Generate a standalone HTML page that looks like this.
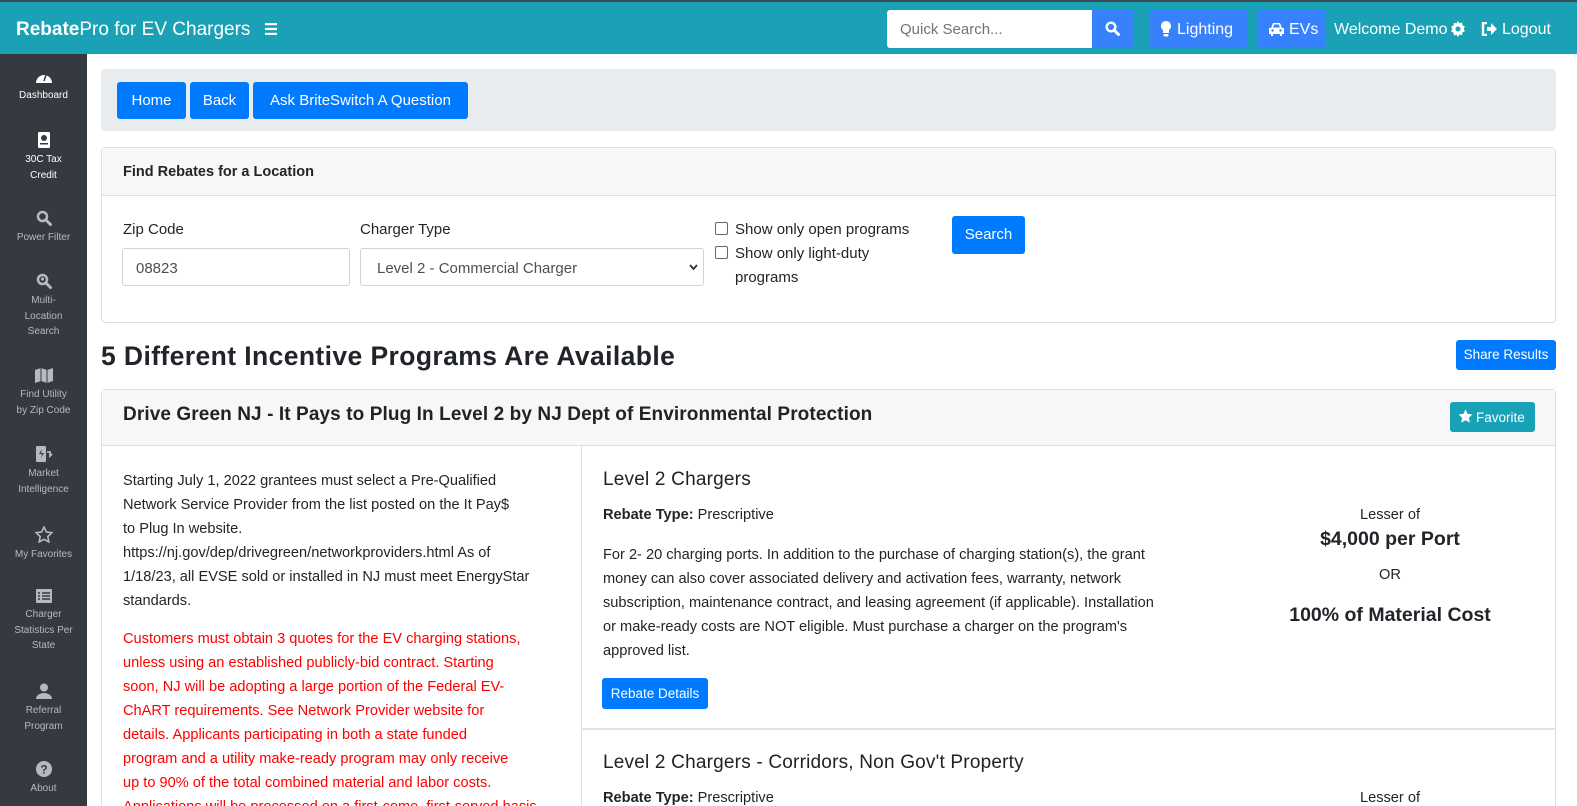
<!DOCTYPE html>
<html><head><meta charset="utf-8">
<style>
*{box-sizing:border-box;margin:0;padding:0}
html,body{width:1577px;height:806px;overflow:hidden}
body{background:#fff;font-family:"Liberation Sans",Arial,sans-serif;color:#212529;position:relative;font-size:15px}
.a{position:absolute;white-space:nowrap}
.top{position:absolute;left:0;top:0;width:1577px;height:54px;background:#1aa1b5;border-top:2px solid #3b4a52}
.side{position:absolute;left:0;top:54px;width:87px;height:752px;background:#343a40}
.si{position:absolute;left:0;width:87px;text-align:center;color:#b5bac0;font-size:10px;line-height:15.5px}
.si svg{display:block;margin:0 auto 4px}
.btn{position:absolute;background:#007bff;color:#fff;border-radius:3px;text-align:center;font-size:15px}
.p{font-size:14.6px;line-height:24px}
</style></head><body>
<div class="top"></div>
<div class="a" style="left:16px;top:19px;color:#fff;font-size:19px"><b>Rebate</b>Pro for EV Chargers</div>
<svg class="a" style="left:265px;top:23px" width="12" height="12"><rect y="0" width="12" height="2.2" fill="#fff"/><rect y="4.9" width="12" height="2.2" fill="#fff"/><rect y="9.8" width="12" height="2.2" fill="#fff"/></svg>
<div class="a" style="left:887px;top:10px;width:205px;height:38px;background:#fff;border-radius:3px 0 0 3px"></div>
<div class="a" style="left:900px;top:21px;color:#6c757d;font-size:15px">Quick Search...</div>
<div class="a" style="left:1092px;top:10px;width:42px;height:38px;background:#3881fd;border-radius:0 3px 3px 0"></div>
<svg class="a" style="left:1105px;top:21px" width="15" height="15"><circle cx="6" cy="6" r="4.3" stroke="#fff" stroke-width="2.4" fill="none"/><line x1="9" y1="9" x2="13.5" y2="13.5" stroke="#fff" stroke-width="3" stroke-linecap="round"/></svg>
<div class="a" style="left:1150px;top:10px;width:98px;height:38px;background:#3881fd;border-radius:3px"></div>
<svg class="a" style="left:1160px;top:20px" width="12" height="18"><path d="M6 1a5 5 0 0 0-3 9v3h6v-3a5 5 0 0 0-3-9z" fill="#fff"/><rect x="3.5" y="14" width="5" height="2.5" rx="1" fill="#fff"/></svg>
<div class="a" style="left:1177px;top:21px;color:#fff;font-size:16px">Lighting</div>
<div class="a" style="left:1257px;top:10px;width:69px;height:38px;background:#3881fd;border-radius:3px"></div>
<svg class="a" style="left:1268px;top:22px" width="17" height="14"><path d="M3 6l2-5h7l2 5h2v6h-2v2h-2v-2H5v2H3v-2H1V6z" fill="#fff"/><circle cx="4.5" cy="8.5" r="1.2" fill="#3881fd"/><circle cx="12.5" cy="8.5" r="1.2" fill="#3881fd"/><path d="M5 5.5l1.2-3h4.6l1.2 3z" fill="#3881fd"/></svg>
<div class="a" style="left:1289px;top:21px;color:#fff;font-size:16px">EVs</div>
<div class="a" style="left:1334px;top:21px;color:#fff;font-size:16px">Welcome Demo</div>
<svg class="a" style="left:1450px;top:21px" width="16" height="16" viewBox="0 0 16 16"><path d="M8 0l1.5 2.2 2.6-.7.3 2.7 2.5 1.2-1.2 2.4 1.2 2.4-2.5 1.2-.3 2.7-2.6-.7L8 16l-1.5-2.2-2.6.7-.3-2.7-2.5-1.2L2.3 8 1.1 5.6l2.5-1.2.3-2.7 2.6.7z" fill="#fff"/><circle cx="8" cy="8" r="2.5" fill="#1aa1b5"/></svg>
<svg class="a" style="left:1481px;top:22px" width="16" height="14"><path d="M6 1H2v12h4" stroke="#fff" stroke-width="2.4" fill="none"/><path d="M6 5h4V1l6 6-6 6V9H6z" fill="#fff"/></svg>
<div class="a" style="left:1502px;top:21px;color:#fff;font-size:16px">Logout</div>

<div class="side"></div>
<div class="si" style="top:69px;color:#fff"><svg width="18" height="15"><path d="M1 14A8 8 0 1 1 17 14z" fill="#fff"/><line x1="9" y1="12" x2="11" y2="6" stroke="#343a40" stroke-width="1.5"/></svg>Dashboard</div>
<div class="si" style="top:132px;color:#fff"><svg width="14" height="16"><rect x="1" y="0" width="12" height="16" rx="1" fill="#fff"/><circle cx="7" cy="6" r="3" fill="#343a40"/><rect x="3" y="11" width="8" height="1.5" fill="#343a40"/></svg>30C Tax<br>Credit</div>
<div class="si" style="top:210px"><svg width="16" height="16"><circle cx="6.5" cy="6.5" r="4.5" stroke="#b5bac0" stroke-width="2.5" fill="none"/><line x1="10" y1="10" x2="14.5" y2="14.5" stroke="#b5bac0" stroke-width="3" stroke-linecap="round"/></svg>Power Filter</div>
<div class="si" style="top:273px"><svg width="16" height="16"><circle cx="6.5" cy="6.5" r="4.5" stroke="#b5bac0" stroke-width="2.5" fill="none"/><circle cx="6.5" cy="6" r="1.6" fill="#b5bac0"/><line x1="10" y1="10" x2="14.5" y2="14.5" stroke="#b5bac0" stroke-width="3" stroke-linecap="round"/></svg>Multi-<br>Location<br>Search</div>
<div class="si" style="top:368px"><svg width="18" height="15"><path d="M0 2l6-2 6 2 6-2v13l-6 2-6-2-6 2z" fill="#b5bac0"/><path d="M6 0v13M12 2v13" stroke="#343a40" stroke-width="1"/></svg>Find Utility<br>by Zip Code</div>
<div class="si" style="top:446px"><svg width="18" height="16"><rect x="1" y="0" width="10" height="16" rx="1" fill="#b5bac0"/><path d="M7 3l-3 5h3l-1 4 3-5H6z" fill="#343a40"/><path d="M12 6h3v4l2-2" stroke="#b5bac0" stroke-width="1.8" fill="none"/></svg>Market<br>Intelligence</div>
<div class="si" style="top:526px"><svg width="18" height="17"><path d="M9 1l2.4 5 5.4.7-4 3.8 1 5.4L9 13.3 4.2 15.9l1-5.4-4-3.8 5.4-.7z" stroke="#b5bac0" stroke-width="1.6" fill="none"/></svg>My Favorites</div>
<div class="si" style="top:589px"><svg width="16" height="14"><rect width="16" height="14" rx="1" fill="#b5bac0"/><path d="M2 4h2M2 7h2M2 10h2M6 4h8M6 7h8M6 10h8" stroke="#343a40" stroke-width="1.4"/></svg>Charger<br>Statistics Per<br>State</div>
<div class="si" style="top:683px"><svg width="16" height="16"><circle cx="8" cy="4.5" r="4" fill="#b5bac0"/><path d="M0 16a8 6 0 0 1 16 0z" fill="#b5bac0"/></svg>Referral<br>Program</div>
<div class="si" style="top:761px"><svg width="16" height="16"><circle cx="8" cy="8" r="8" fill="#b5bac0"/><text x="8" y="12.5" font-size="12" font-weight="bold" text-anchor="middle" fill="#343a40" font-family="Liberation Sans">?</text></svg>About</div>

<div class="a" style="left:101px;top:69px;width:1455px;height:62px;background:#e9ecef;border-radius:4px"></div>
<div class="btn" style="left:117px;top:82px;width:69px;height:37px;line-height:37px">Home</div>
<div class="btn" style="left:190px;top:82px;width:59px;height:37px;line-height:37px">Back</div>
<div class="btn" style="left:253px;top:82px;width:215px;height:37px;line-height:37px">Ask BriteSwitch A Question</div>

<div class="a" style="left:101px;top:147px;width:1455px;height:176px;border:1px solid #dfdfdf;border-radius:4px"></div>
<div class="a" style="left:102px;top:148px;width:1453px;height:48px;background:#f7f7f7;border-bottom:1px solid #dfdfdf"></div>
<div class="a" style="left:123px;top:164px;font-size:14.5px;font-weight:bold">Find Rebates for a Location</div>
<div class="a" style="left:123px;top:221px;font-size:15px">Zip Code</div>
<div class="a" style="left:122px;top:248px;width:228px;height:38px;border:1px solid #ced4da;border-radius:3px"></div>
<div class="a" style="left:136px;top:260px;font-size:15px;color:#495057">08823</div>
<div class="a" style="left:360px;top:221px;font-size:15px">Charger Type</div>
<div class="a" style="left:360px;top:248px;width:344px;height:38px;border:1px solid #ced4da;border-radius:3px"></div>
<div class="a" style="left:377px;top:260px;font-size:15px;color:#495057">Level 2 - Commercial Charger</div>
<svg class="a" style="left:689px;top:264px" width="9" height="7"><path d="M1 1l3.5 4L8 1" stroke="#333" stroke-width="1.8" fill="none"/></svg>
<div class="a" style="left:715px;top:222px;width:13px;height:13px;border:1px solid #666;border-radius:2px"></div>
<div class="a" style="left:715px;top:246px;width:13px;height:13px;border:1px solid #666;border-radius:2px"></div>
<div class="a p" style="left:735px;top:218px;font-size:15px">Show only open programs<br>Show only light-duty<br>programs</div>
<div class="btn" style="left:952px;top:216px;width:73px;height:38px;line-height:38px">Search</div>

<div class="a" style="left:101px;top:341px;font-size:26.5px;font-weight:bold;letter-spacing:.4px">5 Different Incentive Programs Are Available</div>
<div class="btn" style="left:1456px;top:340px;width:100px;height:30px;line-height:30px;font-size:13.5px">Share Results</div>

<div class="a" style="left:101px;top:389px;width:1455px;height:430px;border:1px solid #dfdfdf;border-radius:4px"></div>
<div class="a" style="left:102px;top:390px;width:1453px;height:56px;background:#f7f7f7;border-bottom:1px solid #dfdfdf"></div>
<div class="a" style="left:123px;top:404px;font-size:19px;font-weight:bold;color:#222;letter-spacing:.1px">Drive Green NJ - It Pays to Plug In Level 2 by NJ Dept of Environmental Protection</div>
<div class="a" style="left:1450px;top:402px;width:85px;height:30px;background:#17a2b8;border-radius:3px"></div>
<svg class="a" style="left:1458px;top:409px" width="15" height="15"><path d="M7.5 0.5l2.1 4.4 4.8.6-3.5 3.3.9 4.8-4.3-2.4-4.3 2.4.9-4.8L.6 5.5l4.8-.6z" fill="#fff"/></svg>
<div class="a" style="left:1476px;top:410px;color:#fff;font-size:13.5px">Favorite</div>

<div class="a" style="left:581px;top:446px;width:1px;height:360px;background:#dfdfdf"></div>
<div class="a p" style="left:123px;top:469px">Starting July 1, 2022 grantees must select a Pre-Qualified<br>Network Service Provider from the list posted on the It Pay$<br>to Plug In website.<br>https://nj.gov/dep/drivegreen/networkproviders.html As of<br>1/18/23, all EVSE sold or installed in NJ must meet EnergyStar<br>standards.</div>
<div class="a p" style="left:123px;top:627px;color:#ff0000">Customers must obtain 3 quotes for the EV charging stations,<br>unless using an established publicly-bid contract. Starting<br>soon, NJ will be adopting a large portion of the Federal EV-<br>ChART requirements. See Network Provider website for<br>details. Applicants participating in both a state funded<br>program and a utility make-ready program may only receive<br>up to 90% of the total combined material and labor costs.<br>Applications will be processed on a first-come, first-served basis.</div>

<div class="a" style="left:581px;top:446px;width:975px;height:284px;border-bottom:2px solid #e4e4e4"></div>
<div class="a" style="left:603px;top:469px;font-size:19px;color:#222;letter-spacing:.2px">Level 2 Chargers</div>
<div class="a" style="left:603px;top:507px;font-size:14.6px"><b>Rebate Type:</b> Prescriptive</div>
<div class="a p" style="left:603px;top:543px">For 2- 20 charging ports. In addition to the purchase of charging station(s), the grant<br>money can also cover associated delivery and activation fees, warranty, network<br>subscription, maintenance contract, and leasing agreement (if applicable). Installation<br>or make-ready costs are NOT eligible. Must purchase a charger on the program's<br>approved list.</div>
<div class="btn" style="left:602px;top:678px;width:106px;height:31px;line-height:31px;font-size:13.5px">Rebate Details</div>
<div class="a" style="left:1240px;top:507px;width:300px;text-align:center;font-size:14.6px">Lesser of</div>
<div class="a" style="left:1240px;top:528px;width:300px;text-align:center;font-size:19.5px;font-weight:bold">$4,000 per Port</div>
<div class="a" style="left:1240px;top:567px;width:300px;text-align:center;font-size:14.6px">OR</div>
<div class="a" style="left:1240px;top:604px;width:300px;text-align:center;font-size:19.5px;font-weight:bold">100% of Material Cost</div>

<div class="a" style="left:603px;top:752px;font-size:19px;color:#222;letter-spacing:.2px">Level 2 Chargers - Corridors, Non Gov't Property</div>
<div class="a" style="left:603px;top:790px;font-size:14.6px"><b>Rebate Type:</b> Prescriptive</div>
<div class="a" style="left:1240px;top:790px;width:300px;text-align:center;font-size:14.6px">Lesser of</div>
</body></html>
